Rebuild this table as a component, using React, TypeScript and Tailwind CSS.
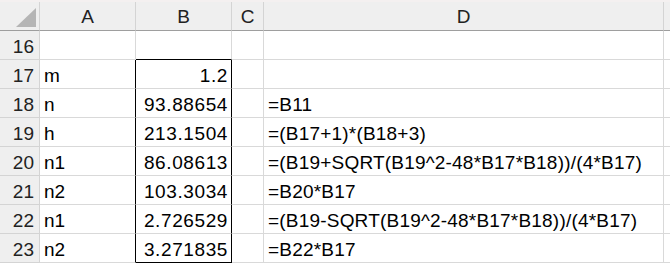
import React from 'react';

type Row = {
    num: number;
    a: string;
    b: string;
    d: string;
};

const rows: Row[] = [
    { num: 16, a: '', b: '', d: '' },
    { num: 17, a: 'm', b: '1.2', d: '' },
    { num: 18, a: 'n', b: '93.88654', d: '=B11' },
    { num: 19, a: 'h', b: '213.1504', d: '=(B17+1)*(B18+3)' },
    { num: 20, a: 'n1', b: '86.08613', d: '=(B19+SQRT(B19^2-48*B17*B18))/(4*B17)' },
    { num: 21, a: 'n2', b: '103.3034', d: '=B20*B17' },
    { num: 22, a: 'n1', b: '2.726529', d: '=(B19-SQRT(B19^2-48*B17*B18))/(4*B17)' },
    { num: 23, a: 'n2', b: '3.271835', d: '=B22*B17' },
];

const cols = 'grid grid-cols-[40px_96px_96px_32px_400px_6px]';

const App = () => {
    return (
        <div className="h-[265px] w-[670px] overflow-hidden bg-white text-[19px] leading-none text-black [font-family:'Liberation_Sans',Arial,sans-serif]">
            {/* column headers */}
            <div className={`${cols} h-[31px] border-t-2 border-[#f4f0f0] bg-[#efefef] text-[#222]`}>
                <div className="flex items-end justify-end border-b border-r border-b-[#9e9e9e] border-r-[#d4d4d4] pb-[3px] pr-[3px]">
                    <svg width="20" height="19" viewBox="0 0 20 19">
                        <polygon points="0,19 20,19 20,0" fill="#b5b5b5" />
                    </svg>
                </div>
                {['A', 'B', 'C', 'D'].map((c) => (
                    <div
                        key={c}
                        className="flex items-center justify-center border-b border-r border-b-[#9e9e9e] border-r-[#d4d4d4] pt-[1px]"
                    >
                        {c}
                    </div>
                ))}
                <div className="border-b border-b-[#9e9e9e]" />
            </div>

            {rows.map((r, i) => {
                const first = i === 0;
                const last = i === rows.length - 1;
                return (
                    <div key={r.num} className={`${cols} h-[29px]`}>
                        <div className="flex items-center justify-end border-b border-r border-[#d4d4d4] bg-[#efefef] pr-[5px] pt-[2px] text-[#222]">
                            {r.num}
                        </div>
                        <div
                            className={`flex items-center border-b border-r border-b-[#d9d9d9] pl-[4px] pt-[2px] ${
                                first ? 'border-r-[#d9d9d9]' : 'border-r-black'
                            }`}
                        >
                            {r.a}
                        </div>
                        <div
                            className={`flex items-center justify-end border-b border-r pr-[3px] pt-[2px] tracking-[0.6px] ${
                                first || last ? 'border-b-black' : 'border-b-[#d9d9d9]'
                            } ${first ? 'border-r-[#d9d9d9]' : 'border-r-black'}`}
                        >
                            {r.b}
                        </div>
                        <div className="border-b border-r border-[#d9d9d9]" />
                        <div className="flex items-center whitespace-nowrap border-b border-r border-[#d9d9d9] pl-[4px] pt-[2px] tracking-[0.2px]">
                            {r.d}
                        </div>
                        <div className="border-b border-[#d9d9d9]" />
                    </div>
                );
            })}
        </div>
    );
};

export default App;
